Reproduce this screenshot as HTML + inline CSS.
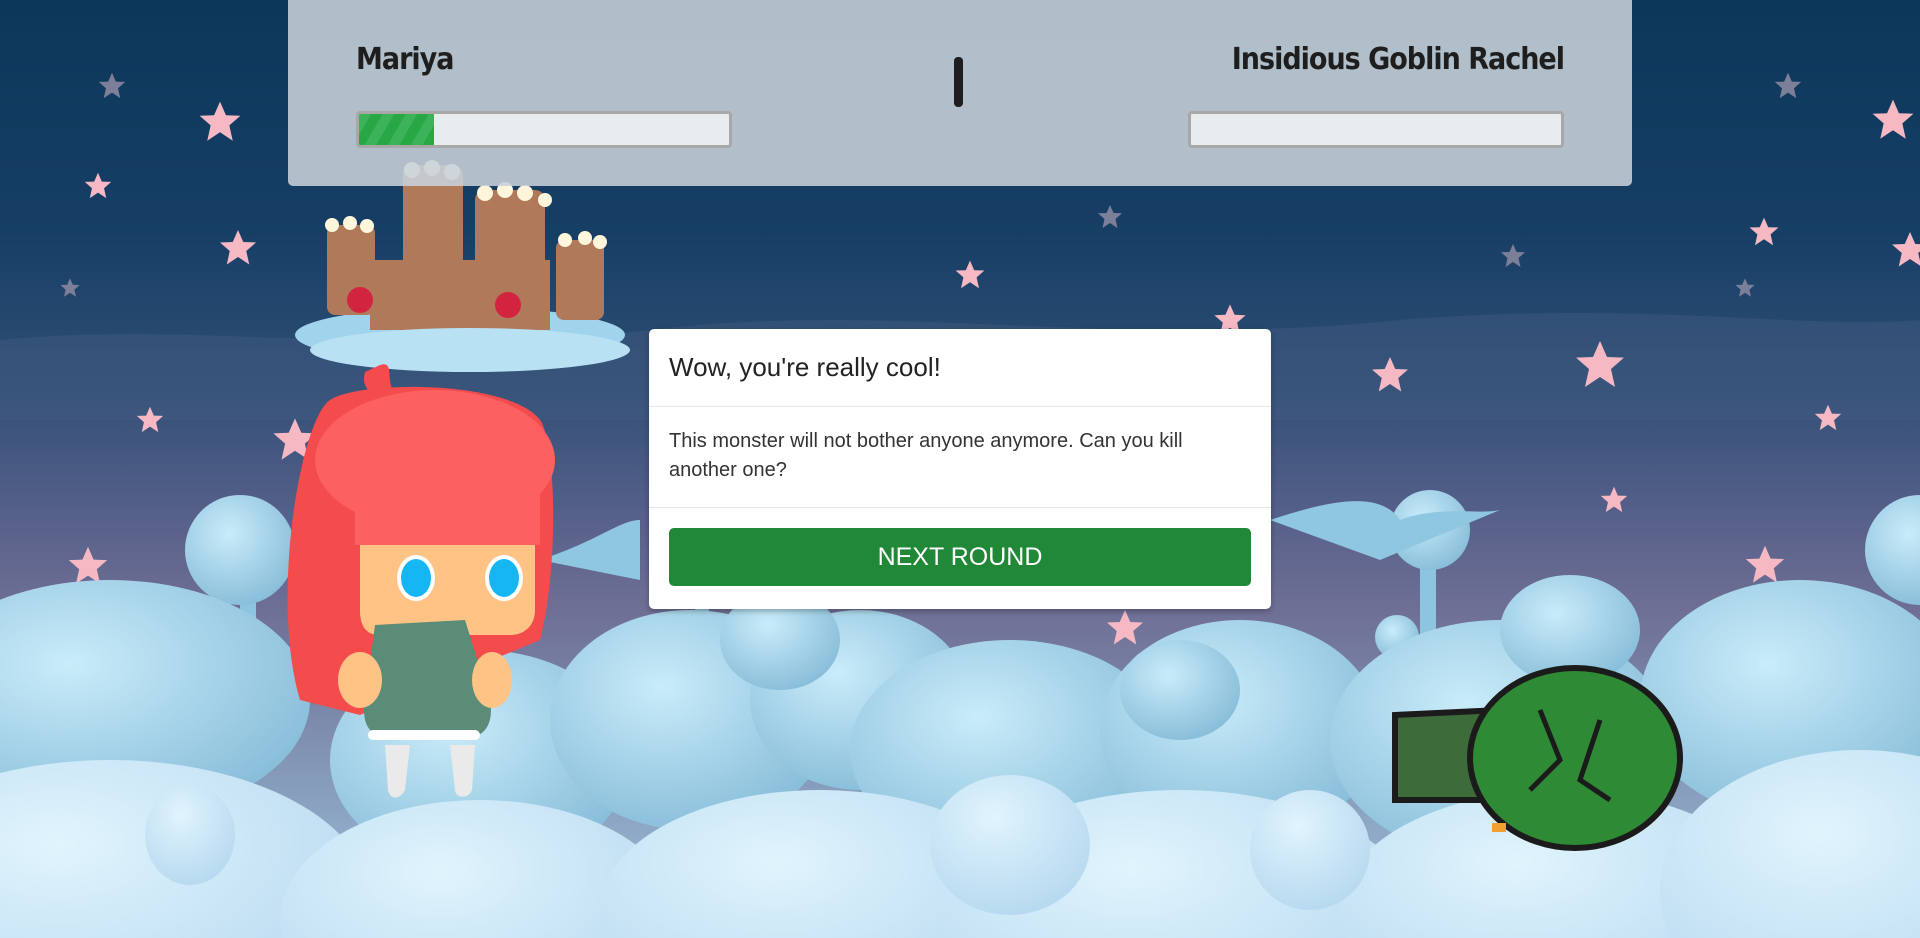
<!DOCTYPE html>
<html><head><meta charset="utf-8"><style>
*{box-sizing:border-box;margin:0;padding:0}
html,body{width:1920px;height:938px;overflow:hidden}
body{position:relative;font-family:"Liberation Sans",sans-serif;background:linear-gradient(180deg,#0c365a 0%,#173f66 25%,#2e4d74 40%,#56608a 55%,#6f6f95 65%,#7a86a8 75%,#9fc6e0 100%)}
.abs{position:absolute}
.panel{left:288px;top:0;width:1344px;height:186px;background:rgba(200,210,218,0.88);border-radius:0 0 5px 5px}
.name{font-family:"DejaVu Sans Condensed","DejaVu Sans",sans-serif;font-weight:bold;font-size:30px;color:#1e1e1e;top:42px;letter-spacing:-1px}
.bar{top:111px;width:376px;height:37px;border:3px solid #a8a8a8;border-radius:4px;background:#e9ecef;overflow:hidden}
.fill{height:100%;width:75px;background:repeating-linear-gradient(-60deg,#28a745 0 10px,#3cb35a 10px 20px)}
.modal{left:649px;top:329px;width:622px;height:280px;background:#fff;border-radius:5px;box-shadow:0 2px 6px rgba(0,0,0,.3)}
.mh{height:78px;border-bottom:1px solid #e6e6e6;padding:23px 20px;font-size:26px;color:#222}
.mb{height:101px;border-bottom:1px solid #e6e6e6;padding:20px 20px;font-size:20px;line-height:29px;color:#333}
.btn{margin:20px 20px 0;height:58px;background:#218838;border-radius:5px;color:#fff;font-size:25px;text-align:center;line-height:58px}
</style></head><body>
<svg class="abs" style="left:0;top:0;display:block" width="1920" height="938">
<defs>
<radialGradient id="cl" cx="40%" cy="35%" r="70%"><stop offset="0" stop-color="#c9ecfa"/><stop offset="1" stop-color="#86bcd8"/></radialGradient>
<radialGradient id="cl2" cx="40%" cy="30%" r="70%"><stop offset="0" stop-color="#e0f4fd"/><stop offset="1" stop-color="#b8daf0"/></radialGradient>
<g id="st"><path d="M0,-12 L3.5,-4 L12,-3.7 L5.5,2 L7.5,11 L0,6 L-7.5,11 L-5.5,2 L-12,-3.7 L-3.5,-4Z"/></g>
</defs>
<path d="M0,340 C200,320 400,360 650,330 C900,300 1100,350 1400,320 C1650,300 1800,330 1920,320 L1920,420 L0,420Z" fill="#3f5a80" opacity=".5"/>
<g fill="#f6b9c4">
<use href="#st" transform="translate(220,122) scale(1.7)"/><use href="#st" transform="translate(98,186) scale(1.1)"/><use href="#st" transform="translate(238,248) scale(1.5)"/>
<use href="#st" transform="translate(150,420) scale(1.1)"/><use href="#st" transform="translate(295,440) scale(1.8)"/><use href="#st" transform="translate(88,566) scale(1.6)"/>
<use href="#st" transform="translate(970,275) scale(1.2)"/><use href="#st" transform="translate(1390,375) scale(1.5)"/><use href="#st" transform="translate(1600,365) scale(2)"/>
<use href="#st" transform="translate(1764,232) scale(1.2)"/><use href="#st" transform="translate(1893,120) scale(1.7)"/><use href="#st" transform="translate(1828,418) scale(1.1)"/>
<use href="#st" transform="translate(1614,500) scale(1.1)"/><use href="#st" transform="translate(1765,565) scale(1.6)"/><use href="#st" transform="translate(1125,628) scale(1.5)"/>
<use href="#st" transform="translate(593,670) scale(1.1)"/><use href="#st" transform="translate(1910,250) scale(1.5)"/><use href="#st" transform="translate(1230,320) scale(1.3)"/>
</g>
<g fill="#7c7f98"><use href="#st" transform="translate(112,86) scale(1.1)"/><use href="#st" transform="translate(1788,86) scale(1.1)"/><use href="#st" transform="translate(1513,256) scale(1)"/><use href="#st" transform="translate(1110,217) scale(1)"/><use href="#st" transform="translate(1745,288) scale(.8)"/><use href="#st" transform="translate(70,288) scale(.8)"/></g>
<g fill="#8dc4e0"><rect x="240" y="530" width="16" height="200"/><rect x="1420" y="540" width="16" height="150"/><rect x="695" y="560" width="14" height="150"/></g>
<circle cx="240" cy="550" r="55" fill="url(#cl)"/><circle cx="1920" cy="550" r="55" fill="url(#cl)"/><circle cx="1430" cy="530" r="40" fill="url(#cl)"/><circle cx="1397" cy="637" r="22" fill="url(#cl)"/>
<path d="M540,560 C600,540 620,520 640,520 L640,580Z M1270,520 C1330,500 1380,490 1400,520 C1440,505 1480,515 1500,510 L1380,560Z" fill="#8fc6e0"/>
<g fill="url(#cl)">
<ellipse cx="110" cy="700" rx="200" ry="120"/><ellipse cx="480" cy="760" rx="150" ry="110"/><ellipse cx="690" cy="720" rx="140" ry="110"/>
<ellipse cx="860" cy="700" rx="110" ry="90"/><ellipse cx="1010" cy="750" rx="160" ry="110"/><ellipse cx="1240" cy="730" rx="140" ry="110"/>
<ellipse cx="1500" cy="740" rx="170" ry="120"/><ellipse cx="1800" cy="700" rx="160" ry="120"/><ellipse cx="1570" cy="630" rx="70" ry="55"/>
<ellipse cx="780" cy="640" rx="60" ry="50"/><ellipse cx="1180" cy="690" rx="60" ry="50"/>
</g>
<g fill="url(#cl2)">
<ellipse cx="110" cy="900" rx="260" ry="140"/><ellipse cx="480" cy="920" rx="200" ry="120"/><ellipse cx="820" cy="910" rx="220" ry="120"/>
<ellipse cx="1180" cy="920" rx="240" ry="130"/><ellipse cx="1560" cy="910" rx="220" ry="120"/><ellipse cx="1860" cy="890" rx="200" ry="140"/>
<ellipse cx="1010" cy="845" rx="80" ry="70"/><ellipse cx="1310" cy="850" rx="60" ry="60"/><ellipse cx="190" cy="835" rx="45" ry="50"/>
</g>
<ellipse cx="460" cy="335" rx="165" ry="28" fill="#9fd4ec"/>
<g fill="#b07a5a"><rect x="327" y="225" width="48" height="90" rx="8"/><rect x="403" y="165" width="60" height="150" rx="10"/><rect x="475" y="190" width="70" height="125" rx="10"/><rect x="556" y="240" width="48" height="80" rx="8"/><rect x="370" y="260" width="180" height="70"/></g>
<g fill="#fff6dc"><circle cx="332" cy="225" r="7"/><circle cx="350" cy="223" r="7"/><circle cx="367" cy="226" r="7"/><circle cx="412" cy="170" r="8"/><circle cx="432" cy="168" r="8"/><circle cx="452" cy="172" r="8"/><circle cx="485" cy="193" r="8"/><circle cx="505" cy="190" r="8"/><circle cx="525" cy="193" r="8"/><circle cx="545" cy="200" r="7"/><circle cx="565" cy="240" r="7"/><circle cx="585" cy="238" r="7"/><circle cx="600" cy="242" r="7"/></g>
<circle cx="360" cy="300" r="13" fill="#d3243f"/><circle cx="508" cy="305" r="13" fill="#d3243f"/>
<ellipse cx="470" cy="350" rx="160" ry="22" fill="#b8e1f3"/>
<path d="M330,400 C300,420 270,600 300,700 L360,715 L540,640 C560,560 555,440 540,420 C510,380 360,380 330,400Z" fill="#f44c4c"/>
<path d="M365,372 C360,390 375,400 395,395 C385,380 395,360 380,365Z" fill="#f44c4c"/>
<ellipse cx="435" cy="460" rx="120" ry="70" fill="#fd6060"/>
<path d="M360,520 L535,520 L535,610 C535,625 525,635 510,635 L380,635 C365,635 360,625 360,610Z" fill="#ffc485"/>
<rect x="355" y="490" width="185" height="55" fill="#fd6060"/>
<ellipse cx="416" cy="578" rx="19" ry="23" fill="#fff"/><ellipse cx="416" cy="578" rx="15" ry="19" fill="#15b6f1"/>
<ellipse cx="504" cy="578" rx="19" ry="23" fill="#fff"/><ellipse cx="504" cy="578" rx="15" ry="19" fill="#15b6f1"/>
<path d="M375,625 L465,620 L490,700 C495,730 480,740 455,740 L400,740 C375,740 360,730 365,700Z" fill="#5a8c78"/>
<rect x="368" y="730" width="112" height="10" rx="5" fill="#fff"/>
<path d="M385,745 L410,745 L405,790 C400,800 390,800 388,790Z M450,745 L475,745 L472,790 C468,800 455,798 455,790Z" fill="#eaeaea"/>
<ellipse cx="360" cy="680" rx="22" ry="28" fill="#ffc485"/><ellipse cx="492" cy="680" rx="20" ry="28" fill="#ffc485"/>
<g stroke="#1b1b1b" stroke-width="6">
<path d="M1395,715 L1500,710 L1500,800 L1395,800Z" fill="#3e6b3a"/>
<ellipse cx="1575" cy="758" rx="105" ry="90" fill="#2f8a36"/>
</g>
<path d="M1540,710 L1560,760 L1530,790 M1600,720 L1580,780 L1610,800" stroke="#1b1b1b" stroke-width="5" fill="none"/>
<rect x="1492" y="823" width="14" height="9" fill="#f0a030"/>
</svg>
<div class="abs panel"></div>
<div class="abs name" style="left:356px">Mariya</div>
<div class="abs name" style="right:356px">Insidious Goblin Rachel</div>
<div class="abs" style="left:954px;top:57px;width:9px;height:50px;background:#1e1e1e;border-radius:4px"></div>
<div class="abs bar" style="left:356px"><div class="fill"></div></div>
<div class="abs bar" style="left:1188px"></div>
<div class="abs modal">
<div class="mh">Wow, you're really cool!</div>
<div class="mb">This monster will not bother anyone anymore. Can you kill another one?</div>
<div class="btn">NEXT ROUND</div>
</div>
</body></html>
